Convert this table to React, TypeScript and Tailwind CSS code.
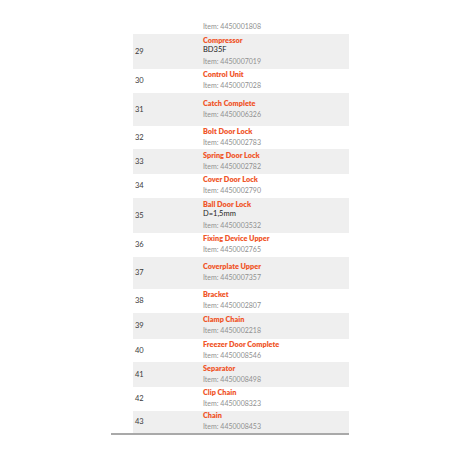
const rows = [
  { no: "", title: "", item: "4450001808", h: 34, top: true },
  { no: "29", title: "Compressor", desc: "BD35F", item: "4450007019", h: 35 },
  { no: "30", title: "Control Unit", item: "4450007028", h: 24 },
  { no: "31", title: "Catch Complete", item: "4450006326", h: 33 },
  { no: "32", title: "Bolt Door Lock", item: "4450002783", h: 23 },
  { no: "33", title: "Spring Door Lock", item: "4450002782", h: 25 },
  { no: "34", title: "Cover Door Lock", item: "4450002790", h: 24 },
  { no: "35", title: "Ball Door Lock", desc: "D=1,5mm", item: "4450003532", h: 35 },
  { no: "36", title: "Fixing Device Upper", item: "4450002765", h: 24 },
  { no: "37", title: "Coverplate Upper", item: "4450007357", h: 32 },
  { no: "38", title: "Bracket", item: "4450002807", h: 24 },
  { no: "39", title: "Clamp Chain", item: "4450002218", h: 26 },
  { no: "40", title: "Freezer Door Complete", item: "4450008546", h: 23 },
  { no: "41", title: "Separator", item: "4450008498", h: 25 },
  { no: "42", title: "Clip Chain", item: "4450008323", h: 24 },
  { no: "43", title: "Chain", item: "4450008453", h: 22 },
];

export default function App() {
  return (
    <div className="w-[460px] h-[460px] bg-white font-['Lato',sans-serif]">
      <div className="ml-[111px] w-[238px] border-b-2 border-[#a9a9a9]">
        {rows.map((r, i) => (
          <div
            key={i}
            style={{ height: r.h }}
            className={`ml-[22px] flex ${r.top ? "items-end" : "items-center"} ${
              i % 2 === 1 ? "bg-[#efefef]" : "bg-white"
            }`}
          >
            <div className="w-[70px] pl-[2px] text-[7.5px] text-[#3a3a3a]">{r.no}</div>
            <div className={`flex flex-col ${r.top ? "pb-[3px]" : "pb-[2px]"}`}>
              {r.title && (
                <div className="text-[7.3px] leading-[9px] font-extrabold text-[#f0562a]">{r.title}</div>
              )}
              {r.desc && (
                <div className="text-[7.5px] leading-[9px] text-[#222]">{r.desc}</div>
              )}
              <div
                className={`text-[7px] leading-[9px] text-[#8f8f8f] ${
                  r.desc ? "mt-[3px]" : r.title ? "mt-[2px]" : ""
                }`}
              >
                Item: {r.item}
              </div>
            </div>
          </div>
        ))}
      </div>
    </div>
  );
}
